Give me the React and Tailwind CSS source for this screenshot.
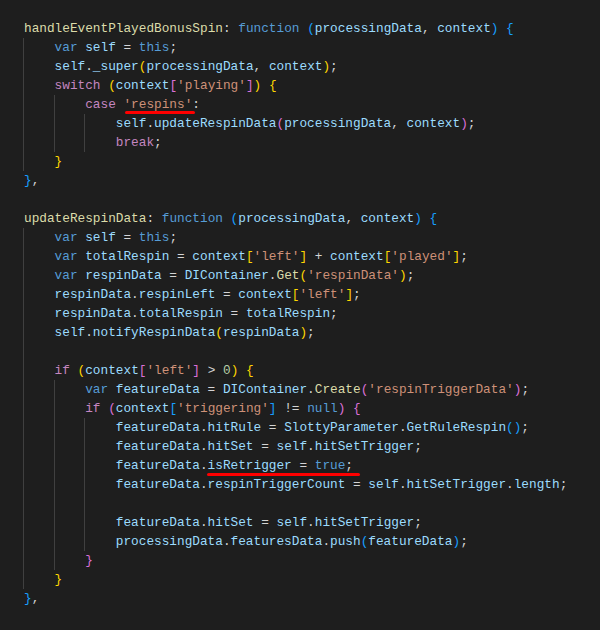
const C = {
  f: 'text-[#dcdcaa]',
  k: 'text-[#569cd6]',
  c: 'text-[#c586c0]',
  v: 'text-[#9cdcfe]',
  s: 'text-[#ce9178]',
  n: 'text-[#b5cea8]',
  p: 'text-[#d4d4d4]',
  y: 'text-[#ffd700]',
  m: 'text-[#da70d6]',
  b: 'text-[#179fff]',
}

// each line: [indent, tokens, guides?, mark?]
// token: 'x:text' where x is a colour key
const lines = [
  [0, ['f:handleEventPlayedBonusSpin', 'p:: ', 'k:function ', 'b:(', 'v:processingData', 'p:, ', 'v:context', 'b:)', 'p: ', 'b:{']],
  [1, ['k:var ', 'v:self', 'p: = ', 'k:this', 'p:;']],
  [1, ['v:self', 'p:.', 'v:_super', 'y:(', 'v:processingData', 'p:, ', 'v:context', 'y:)', 'p:;']],
  [1, ['c:switch ', 'y:(', 'v:context', 'm:[', "s:'playing'", 'm:]', 'y:)', 'p: ', 'y:{']],
  [2, ['c:case ', "s:'respins'", 'p::'], null, { at: 1, len: 1, left: '1.5px', right: '-2.5px', bottom: '-2px' }],
  [3, ['v:self', 'p:.', 'v:updateRespinData', 'm:(', 'v:processingData', 'p:, ', 'v:context', 'm:)', 'p:;']],
  [3, ['c:break', 'p:;']],
  [1, ['y:}']],
  [0, ['b:}', 'p:,']],
  [0, [], 0],
  [0, ['f:updateRespinData', 'p:: ', 'k:function ', 'b:(', 'v:processingData', 'p:, ', 'v:context', 'b:)', 'p: ', 'b:{']],
  [1, ['k:var ', 'v:self', 'p: = ', 'k:this', 'p:;']],
  [1, ['k:var ', 'v:totalRespin', 'p: = ', 'v:context', 'y:[', "s:'left'", 'y:]', 'p: + ', 'v:context', 'y:[', "s:'played'", 'y:]', 'p:;']],
  [1, ['k:var ', 'v:respinData', 'p: = ', 'v:DIContainer', 'p:.', 'f:Get', 'y:(', "s:'respinData'", 'y:)', 'p:;']],
  [1, ['v:respinData', 'p:.', 'v:respinLeft', 'p: = ', 'v:context', 'y:[', "s:'left'", 'y:]', 'p:;']],
  [1, ['v:respinData', 'p:.', 'v:totalRespin', 'p: = ', 'v:totalRespin', 'p:;']],
  [1, ['v:self', 'p:.', 'v:notifyRespinData', 'y:(', 'v:respinData', 'y:)', 'p:;']],
  [0, [], 1],
  [1, ['c:if ', 'y:(', 'v:context', 'm:[', "s:'left'", 'm:]', 'p: > ', 'n:0', 'y:)', 'p: ', 'y:{']],
  [2, ['k:var ', 'v:featureData', 'p: = ', 'v:DIContainer', 'p:.', 'f:Create', 'm:(', "s:'respinTriggerData'", 'm:)', 'p:;']],
  [2, ['c:if ', 'm:(', 'v:context', 'b:[', "s:'triggering'", 'b:]', 'p: != ', 'k:null', 'm:)', 'p: ', 'm:{']],
  [3, ['v:featureData', 'p:.', 'v:hitRule', 'p: = ', 'v:SlottyParameter', 'p:.', 'v:GetRuleRespin', 'b:()', 'p:;']],
  [3, ['v:featureData', 'p:.', 'v:hitSet', 'p: = ', 'v:self', 'p:.', 'v:hitSetTrigger', 'p:;']],
  [3, ['v:featureData', 'p:.', 'v:isRetrigger', 'p: = ', 'k:true', 'p:;'], null, { at: 2, len: 4, left: '-1px', right: '-7px', bottom: '-3px' }],
  [3, ['v:featureData', 'p:.', 'v:respinTriggerCount', 'p: = ', 'v:self', 'p:.', 'v:hitSetTrigger', 'p:.', 'v:length', 'p:;']],
  [0, [], 3],
  [3, ['v:featureData', 'p:.', 'v:hitSet', 'p: = ', 'v:self', 'p:.', 'v:hitSetTrigger', 'p:;']],
  [3, ['v:processingData', 'p:.', 'v:featuresData', 'p:.', 'v:push', 'b:(', 'v:featureData', 'b:)', 'p:;']],
  [2, ['m:}']],
  [1, ['y:}']],
  [0, ['b:}', 'p:,']],
]

function Tok({ t }) {
  const i = t.indexOf(':')
  return <span className={C[t.slice(0, i)]}>{t.slice(i + 1)}</span>
}

function Line({ indent, tokens, guides, mark }) {
  const g = guides ?? indent
  const cols = Math.max(indent, g)
  let body = tokens.map((t, i) => <Tok key={i} t={t} />)
  if (mark) {
    const before = body.slice(0, mark.at)
    const inside = body.slice(mark.at, mark.at + mark.len)
    const after = body.slice(mark.at + mark.len)
    body = [
      ...before,
      <span key="mark" className="relative">
        {inside}
        <span
          className="absolute h-[3px] rounded-full bg-[#f00]"
          style={{ left: mark.left, right: mark.right, bottom: mark.bottom }}
        />
      </span>,
      ...after,
    ]
  }
  return (
    <div className="flex h-[19px] items-center whitespace-pre">
      {Array.from({ length: cols }).map((_, i) => (
        <span
          key={i}
          className={'inline-block h-full w-[4ch] ' + (i < g ? '-translate-x-px border-l border-[#404040]' : '')}
        />
      ))}
      <span>{body}</span>
    </div>
  )
}

export default function App() {
  return (
    <div
      className="h-[630px] w-[600px] overflow-hidden bg-[#1e1e1e] pl-[24px] pt-[19px] text-[12.75px] leading-[19px]"
      style={{ fontFamily: '"Liberation Mono", monospace' }}
    >
      {lines.map(([indent, tokens, guides, mark], i) => (
        <Line key={i} indent={indent} tokens={tokens} guides={guides} mark={mark} />
      ))}
    </div>
  )
}
